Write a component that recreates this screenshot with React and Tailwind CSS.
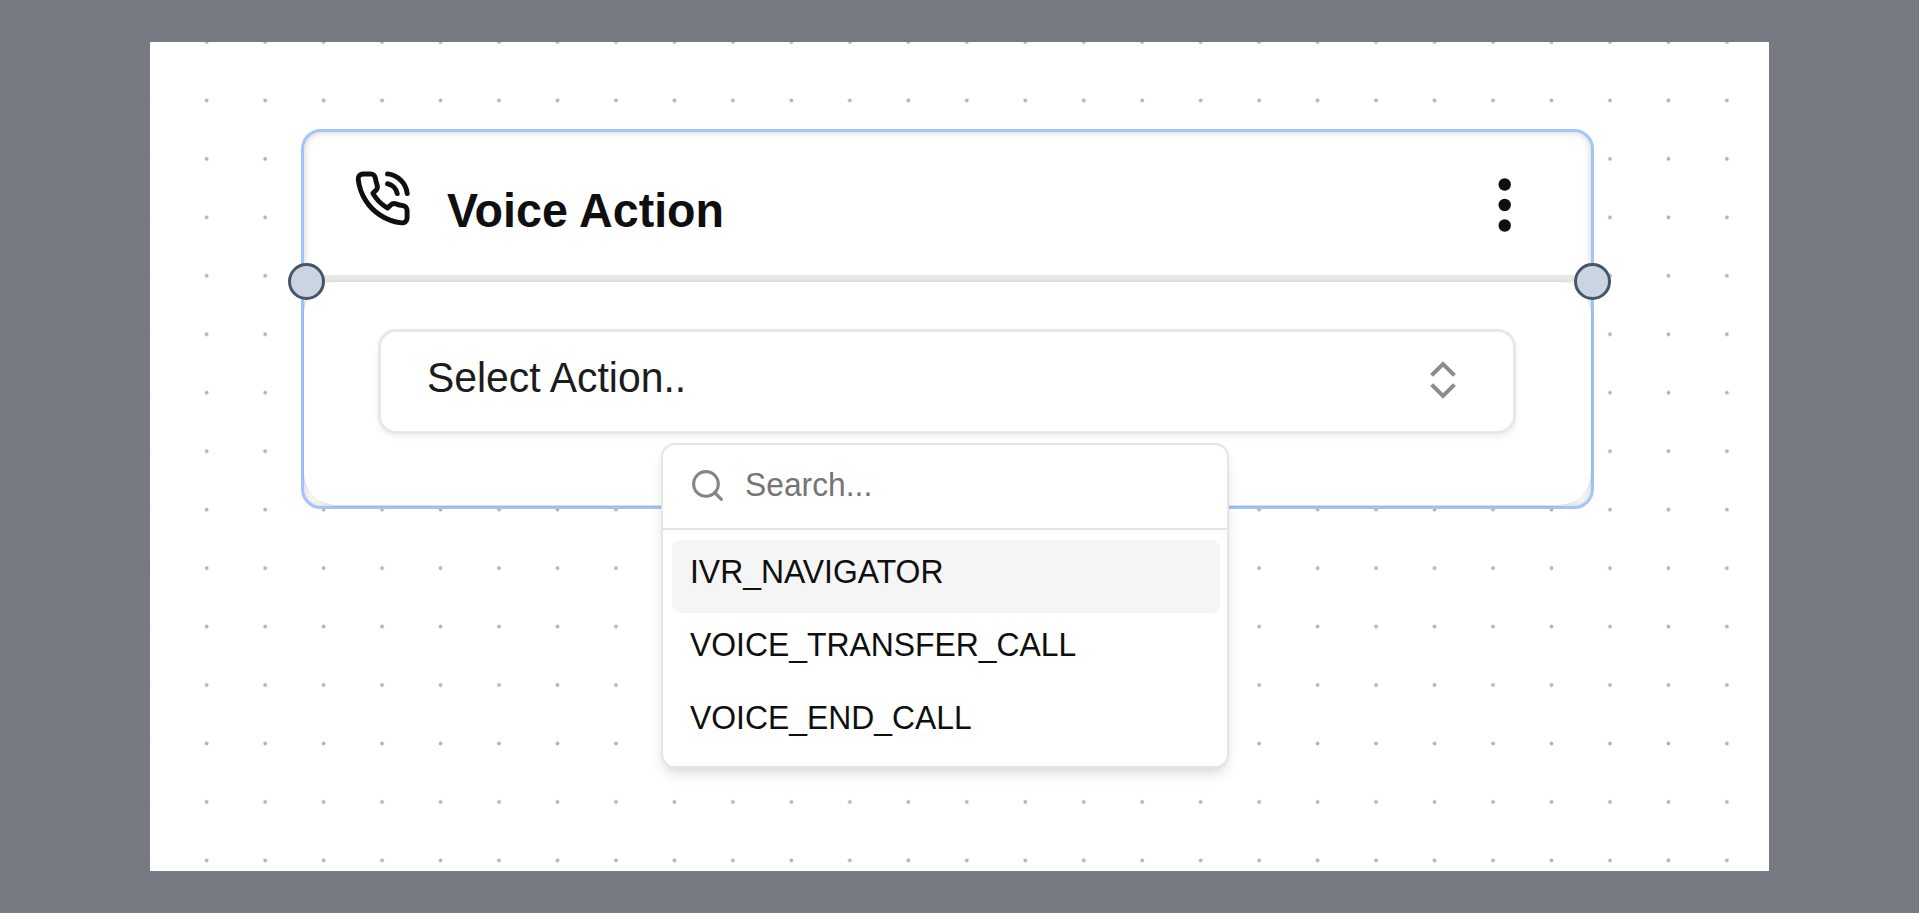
import React, { useState } from 'react';
import { ChevronsUpDown, Search } from 'lucide-react';

const actions = ['IVR_NAVIGATOR', 'VOICE_TRANSFER_CALL', 'VOICE_END_CALL'];

const PhoneIcon = () => (
  <svg
    className="size-[59px] shrink-0"
    viewBox="0 0 24 24"
    fill="none"
    stroke="currentColor"
    strokeWidth="2"
    strokeLinecap="round"
    strokeLinejoin="round"
  >
    <path d="M22 16.92v3a2 2 0 0 1-2.18 2 19.79 19.79 0 0 1-8.63-3.07 19.5 19.5 0 0 1-6-6 19.79 19.79 0 0 1-3.07-8.67A2 2 0 0 1 4.11 2h3a2 2 0 0 1 2 1.72 12.84 12.84 0 0 0 .7 2.81 2 2 0 0 1-.45 2.11L8.09 9.91a16 16 0 0 0 6 6l1.27-1.27a2 2 0 0 1 2.11-.45 12.84 12.84 0 0 0 2.81.7A2 2 0 0 1 22 16.92z" />
    <path d="M14.05 2a9 9 0 0 1 8 7.94" />
    <path d="M14.05 6A5 5 0 0 1 18 10" />
  </svg>
);

const DotsIcon = () => (
  <svg className="h-[54px] w-[14px]" viewBox="0 0 14 54" fill="currentColor">
    <circle cx="6.7" cy="6.5" r="6.2" />
    <circle cx="6.7" cy="27" r="6.2" />
    <circle cx="6.7" cy="47.5" r="6.2" />
  </svg>
);

// Dotted canvas background
const Dots = () => (
  <svg className="absolute inset-0 size-full">
    <defs>
      <pattern id="dots" x="27.5" y="29.2" width="58.47" height="58.46" patternUnits="userSpaceOnUse">
        <circle cx="29.2" cy="29.2" r="1.9" fill="#b4b4b4" />
      </pattern>
    </defs>
    <rect width="100%" height="100%" fill="url(#dots)" />
  </svg>
);

const ActionMenu = ({ active, onHover }) => (
  <div className="absolute left-[283px] top-[114px] z-20 h-[325px] w-[568px] rounded-[14px] border-2 border-[#e5e5e5] bg-white shadow-[0_9px_14px_-2px_rgba(0,0,0,0.1),0_4px_9px_-4px_rgba(0,0,0,0.1)]">
    <div className="flex h-[85px] items-center border-b-2 border-[#e5e5e5] pl-[26px] pb-0.5">
      <Search className="size-[37px] text-[#858585]" strokeWidth={2} />
      <span className="ml-[19px] origin-bottom scale-y-105 text-[31.8px] leading-none text-[#757575]">Search...</span>
    </div>
    <div className="pl-[9px] pr-[7px] pt-[10px]">
      {actions.map((action) => (
        <div
          key={action}
          onMouseEnter={() => onHover(action)}
          className={`flex h-[73px] items-center rounded-[9px] pl-[18px] pb-2 text-[31.9px] leading-none ${
            active === action ? 'bg-[#f5f5f5]' : ''
          }`}
        >
          <span className="origin-bottom scale-y-105">{action}</span>
        </div>
      ))}
    </div>
  </div>
);

const VoiceActionNode = () => {
  const [active, setActive] = useState(actions[0]);

  return (
    <div className="absolute left-[151px] top-[87px] h-[380px] w-[1293px] rounded-[20px] border-3 border-[#a3c4fb] bg-white shadow-[inset_0_0_7px_rgba(0,0,0,0.2)]">
      <div className="flex h-[150px] justify-between border-b-7 border-[#e8e8e8] pl-[49px] pr-[79px]">
        <div className="flex">
          <div className="pt-[37px]">
            <PhoneIcon />
          </div>
          <h2 className="ml-[35px] origin-bottom scale-y-105 pt-[55px] text-[46.6px] leading-[52px] font-bold">
            Voice Action
          </h2>
        </div>
        <div className="pt-[46px]">
          <DotsIcon />
        </div>
      </div>
      <div className="h-[223px] rounded-[32px] bg-white px-[74px] pr-[75px] pt-[47px] shadow-[0_0_4px_rgba(0,0,0,0.14)]">
        <div className="relative">
          <button className="flex h-[105px] w-full items-center justify-between rounded-[18px] border-3 border-[#e8e8e8] bg-white pl-[46px] pr-[46px] pb-1 shadow-[0_3px_6px_rgba(0,0,0,0.06)]">
            <span className="-mt-0.5 origin-bottom scale-y-105 text-[40.9px] leading-none text-[#1c1c1c]">
              Select Action..
            </span>
            <ChevronsUpDown className="size-[48px] text-[#8c8c8c]" strokeLinecap="square" strokeLinejoin="miter" />
          </button>
          <ActionMenu active={active} onHover={setActive} />
        </div>
      </div>
      {/* Connection handles */}
      <span className="absolute -left-[16px] top-[131px] size-[37px] rounded-full border-3 border-[#475569] bg-[#cbd5e1]" />
      <span className="absolute -right-[20px] top-[131px] size-[37px] rounded-full border-3 border-[#475569] bg-[#cbd5e1]" />
    </div>
  );
};

const App = () => {
  return (
    <div className="h-[913px] bg-[#777a83] pt-[42px] pl-[150px] font-['Liberation_Sans',sans-serif] text-[#0f0f0f]">
      <div className="relative h-[829px] w-[1619px] overflow-hidden bg-white">
        <Dots />
        <VoiceActionNode />
      </div>
    </div>
  );
};

export default App;
